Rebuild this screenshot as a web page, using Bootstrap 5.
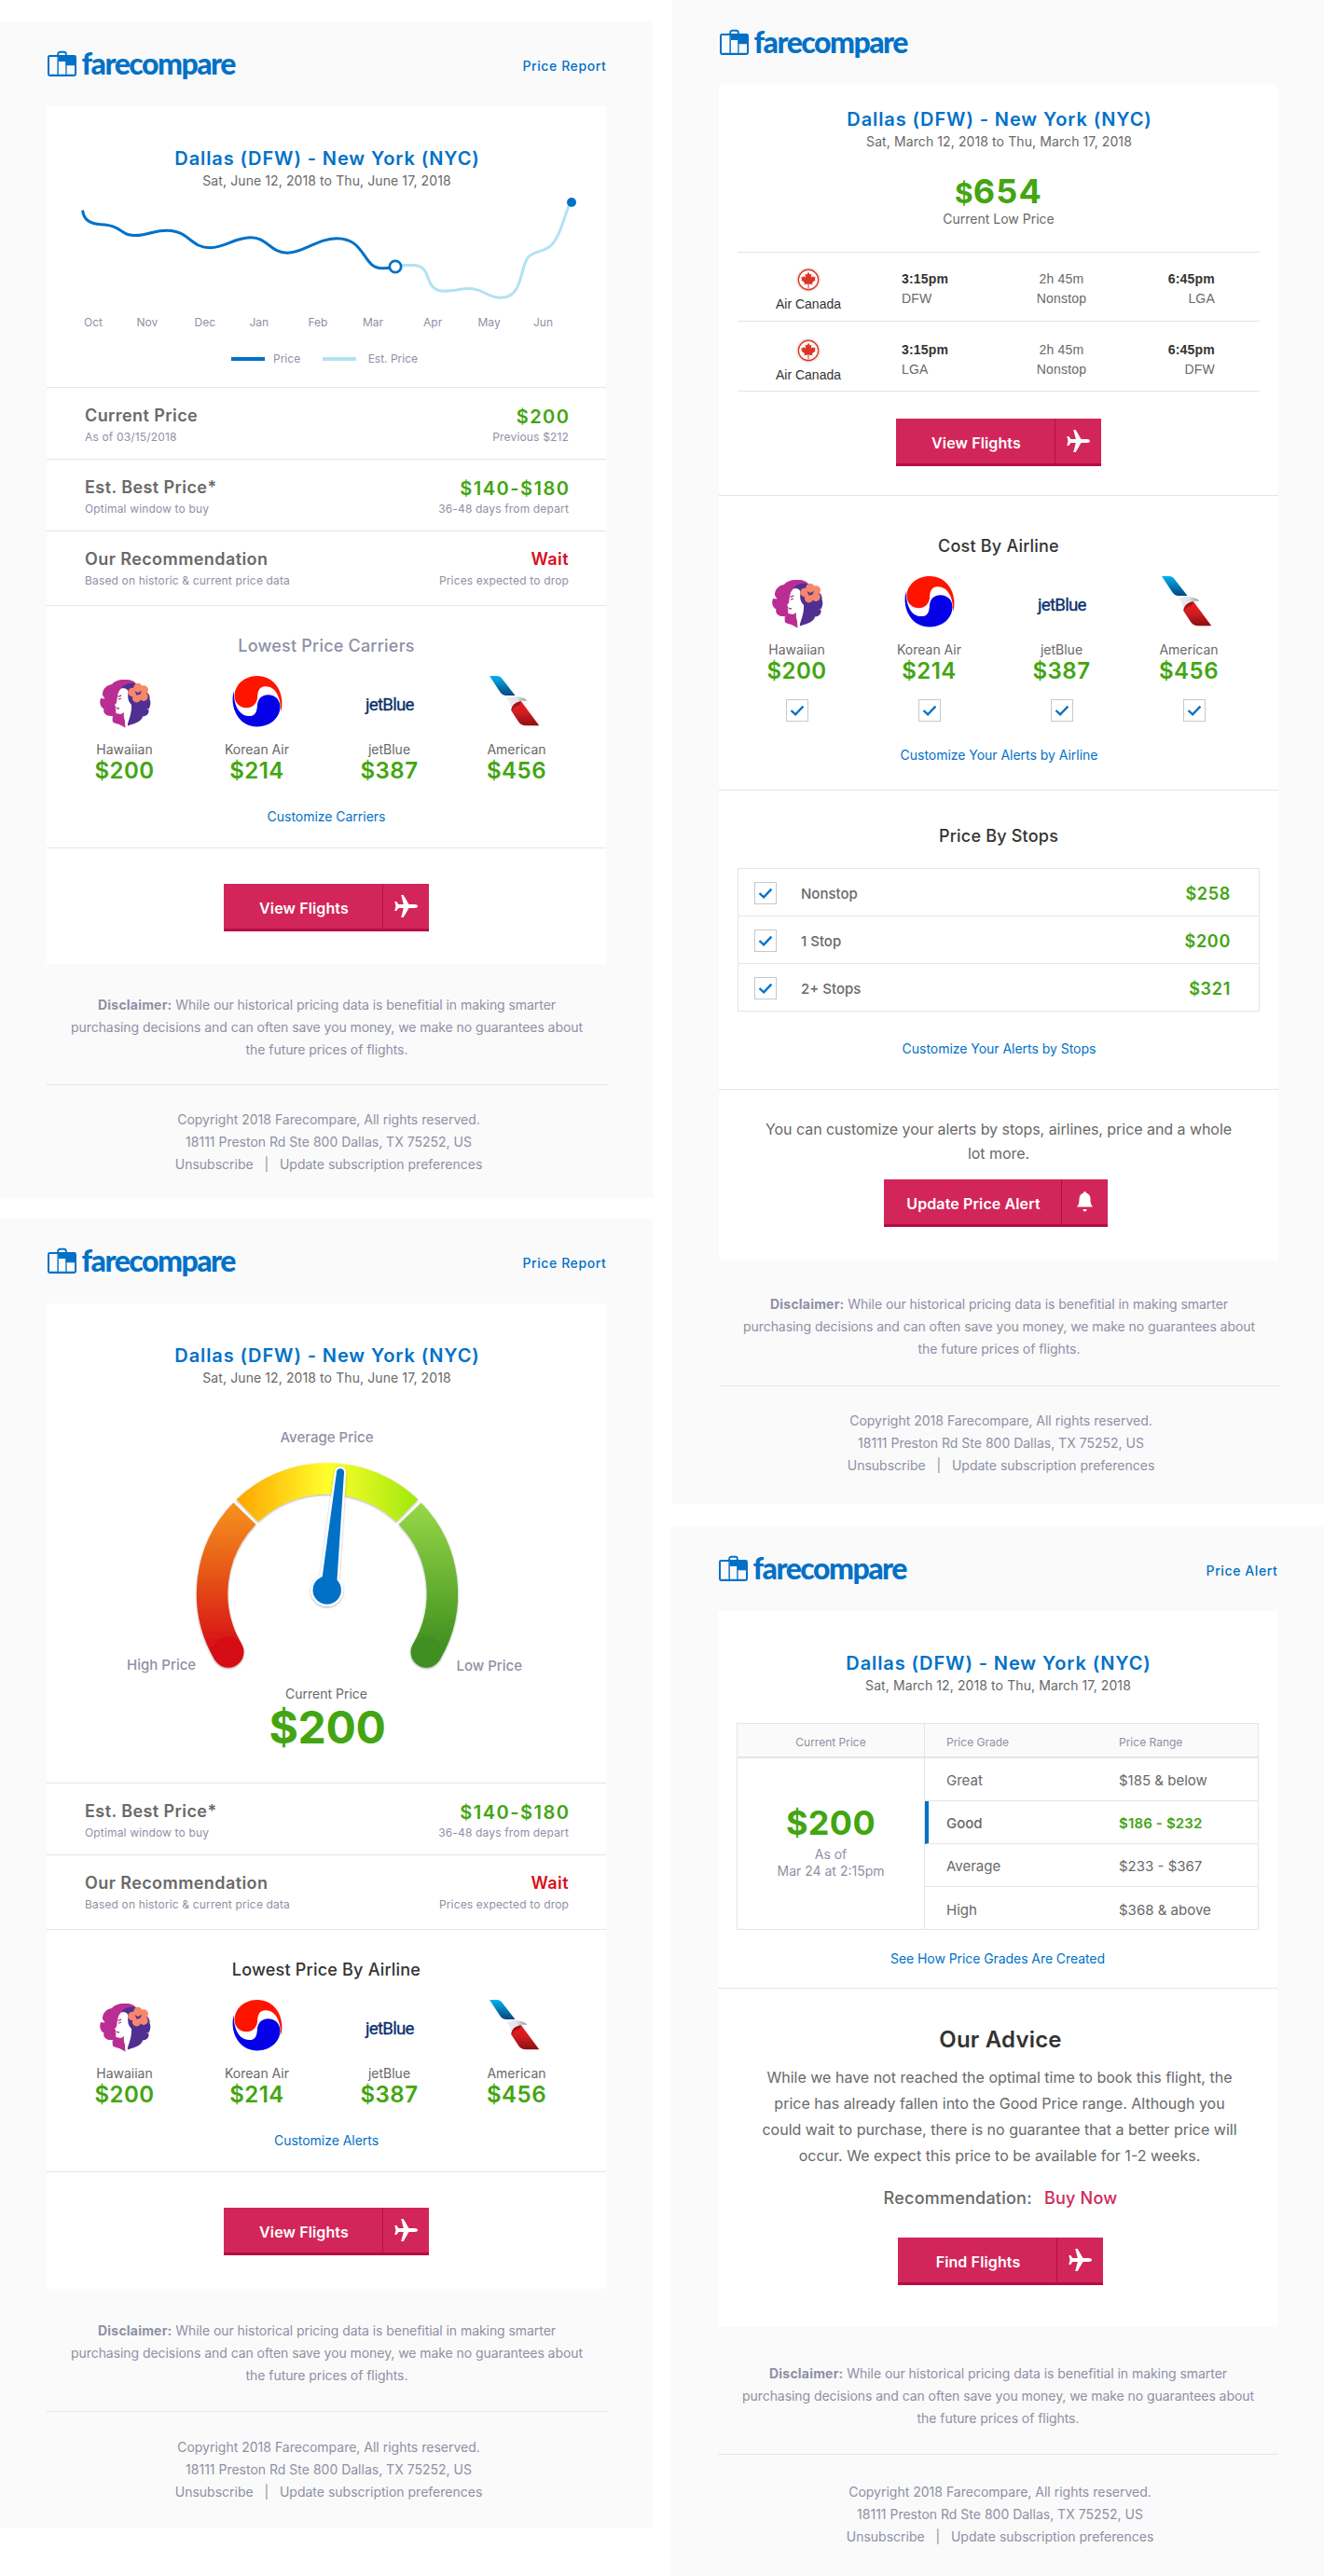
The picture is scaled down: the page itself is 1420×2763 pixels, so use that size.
<!DOCTYPE html>
<html lang="en">
<head>
<meta charset="utf-8">
<meta name="viewport" content="width=device-width, initial-scale=1">
<title>farecompare – price emails</title>
<link rel="stylesheet" href="https://cdn.jsdelivr.net/npm/bootstrap@5.3.0/dist/css/bootstrap.min.css">
<style>
:root{--fc-blue:#0071c7;--fc-green:#43a511;--fc-red:#d90f1b;--fc-pink:#d2265a;--fc-pink-dark:#b70d42;--fc-ink:#333;--fc-text:#696969;--fc-muted:#8f90a5;--fc-line:#e4e5e6}
body{font-family:Inter,"Liberation Sans",sans-serif;background:#fff;color:var(--fc-text);width:1420px;font-size:14px;line-height:17px}
a{color:var(--fc-blue);text-decoration:none}
p,h1,h2,h3{margin:0}
.board{column-gap:20px}
.col-left{width:700px;padding-top:23px;row-gap:22px}
.col-right{width:700px;row-gap:24px}
.mail{background:#fafafa;padding:0 50px}
.mail-report{height:1262px}
.mail-gauge{height:1404px}
.mail-alert{height:1613px;margin-left:1px;padding-right:49px}
.mail-grade{height:1126px}
.mail-head{height:91px}
.brand{margin-top:30px;display:block}
.brand-name{font:900 32px Lato,sans-serif;fill:var(--fc-blue);letter-spacing:-1.5px}
.kind{margin-top:39px;font-weight:500;letter-spacing:.6px;margin-right:-.4px}
.sheet{background:#fff}
.block{border-bottom:1px solid var(--fc-line);text-align:center}
.block-last{border-bottom:0}
/* type */
.t12{font-size:12px;line-height:15px}
.t14{font-size:14px;line-height:17px}
.t15{font-size:15px;line-height:19px}
.t16{font-size:16px;line-height:20px}
.t18{font-size:18px;line-height:21px}
.route{font-size:20px;line-height:24px;font-weight:600;letter-spacing:.9px;color:var(--fc-blue);padding-left:2px}
.dates{margin-top:3px;letter-spacing:.1px;padding-left:1px}
.muted{color:var(--fc-muted)}
.ink{color:var(--fc-ink)}
.green{color:var(--fc-green)}
.block-title{font-size:18px;line-height:21px;font-weight:500;letter-spacing:.2px}
/* chart */
.chart-block{height:302px;padding-top:44px}
.chart text{font:400 12px Inter,sans-serif;fill:var(--fc-muted)}
.legend{padding-left:198px;margin-top:17px}
.key{width:36px;height:4px;background:var(--fc-blue);margin-right:9px}
.key-est{background:#b2e2f2;margin:0 12.5px 0 24px}
/* stat rows */
.stat{height:77px;padding:19px 40px 0 41px;text-align:left}
.stat-tall{height:80px}
.stat h3{font-size:18px;line-height:21px;font-weight:600;letter-spacing:.42px}
.stat .sub{font-size:12px;line-height:15px;letter-spacing:.16px;color:var(--fc-muted);margin-top:5px}
.stat .amount{font-size:20px;line-height:24px;font-weight:600;letter-spacing:1.5px;margin-right:-1.500px;color:var(--fc-green)}
.stat .amount + .sub{margin-top:2px}
.wait{color:var(--fc-red)!important}
/* carriers */
.carriers{height:260px;padding-top:32px}
.carriers-pick{height:316px;padding-top:43px}
.carrier-grid{display:grid;grid-template-columns:142px 142px 142px 131px;padding-left:12.5px;margin-top:22px}
.carrier-grid svg.logo{display:block;width:56px;height:54px;margin:0 auto 16px;overflow:visible}
.carrier-grid>div:last-child svg.logo{transform:translateX(-3px)}
.carrier-grid>div:last-child .tick{transform:translateX(6px)}
.fare{font-size:24px;line-height:29px;font-weight:600;letter-spacing:.5px;color:var(--fc-green)}
.tick{display:block;width:24px;height:24px;border:1px solid #c6c8cd;background:#fff}
.carrier-grid .tick{margin:16px auto 0}
.more{display:block;letter-spacing:-.03px}
.carriers .more{margin-top:26px}
.carriers-pick .more{margin-top:27px;padding-left:1px}
/* button */
.cta{display:inline-flex;width:220px;height:51px;padding:0;border:0;border-bottom:3px solid var(--fc-pink-dark);border-radius:0;background:var(--fc-pink);color:#fff;font-size:16px;font-weight:600;letter-spacing:.12px;line-height:20px}
.cta .cta-label{flex:1;padding:16px 0 0 2px;border-right:1px solid var(--fc-pink-dark)}
.cta .cta-icon{width:49px;display:flex;align-items:center;justify-content:center}
.cta:hover{background:var(--fc-pink);color:#fff}
.cta-block{height:124px;padding-top:38px}
/* footer */
.disclaimer{padding-top:32px;height:130px;line-height:24px;letter-spacing:-.06px;border-bottom:1px solid var(--fc-line);margin-right:-1px}
.disclaimer b{letter-spacing:.2px}
.foot{padding:25px 0 0 5px;line-height:24px}
.mail-gauge .cta-block{height:125px}
.mail-gauge .disclaimer{padding-top:33px;height:132px}
.mail-gauge .foot{padding-top:26px}
.mail-alert .disclaimer{padding-top:35px;height:135px}
.mail-grade .disclaimer{padding-top:38px;height:137px}
.mail-grade .foot{padding-top:28px}
/* gauge */
.gauge-block{height:515px;padding-top:44px}
.gauge{display:block}
.gauge text{font:500 15px Inter,sans-serif;fill:var(--fc-muted)}
.now{margin-top:10px}
.now-price{font-size:48px;line-height:59px;font-weight:700;letter-spacing:-.3px;margin:-2px 0 0 2px}
/* alert */
.mail-alert .brand{margin-top:0;transform:translateY(30px)}
.low-block{height:441px;padding:25px 20px 0}
.low-price{font-size:36px;line-height:44px;height:44px;font-weight:700;letter-spacing:1.2px;margin-top:23px}
.low-price small{font-size:30px;line-height:1;font-weight:700;letter-spacing:0}
.low-note{margin-top:-1px}
.trip{display:grid;grid-template-columns:152px 135px 121px 152px;height:74px;padding-top:16px;border-bottom:1px solid var(--fc-line);font-family:"Liberation Sans",Arial,sans-serif;line-height:16px}
.trip-first{border-top:1px solid var(--fc-line);height:75px;margin-top:27px}
.trip-second{height:75px;padding-top:18px}
.trip svg{display:block;margin:0 auto 5px}
.trip .leg{padding-top:4px;letter-spacing:.2px}
.trip .leg p + p{margin-top:5px}
.trip .arrive{padding-right:48px;text-align:right}
.trip b{color:var(--fc-ink)}
.low-block .cta{margin-top:29px}
.stops-block{height:321px;padding:38px 20px 0}
.stops{border:1px solid var(--fc-line);margin-top:24px}
.stop-row{height:51px;padding:2px 30px 0 17px;border-bottom:1px solid var(--fc-line)}
.stop-row:last-child{border-bottom:0;height:50px}
.stop-row .tick{margin-right:26px}
.stop-row .t15{font-weight:500}
.stop-row .t18{font-weight:600;letter-spacing:.7px}
.stops-block .more{margin-top:31px;padding-left:1px}
.update-block{height:183px;padding-top:29px}
.update-block p{line-height:26px;letter-spacing:-.05px}
.cta-wide{width:240px;margin:15px 6px 0 0}
/* grade */
.grade-block{height:405px;padding:44px 20px 0}
.grades{display:grid;grid-template-columns:201px 1fr;border:1px solid var(--fc-line);margin-top:32px;height:222px}
.grades .th{height:37px;padding-top:12px;background:#fafafa;border-bottom:2px solid var(--fc-line)}
.grade-now{border-right:1px solid var(--fc-line)}
.grade-price{font-size:36px;line-height:44px;font-weight:700;letter-spacing:.3px;padding-top:47px}
.grade-price + p{margin-top:3px}
.grade-price + p + p{margin-top:1px}
.grade-row{height:46px;padding:2px 0 0 23px;border-bottom:1px solid var(--fc-line);text-align:left}
.grade-row:last-child{border-bottom:0}
.grade-row span:first-child,.th span:first-child{width:185px}
.grades .th.pair{padding-left:23px;text-align:left}
.grade-row.on{border-left:4px solid var(--fc-blue);padding-left:19px;font-weight:500}
.grade-row.on .green{font-weight:600;letter-spacing:.15px}
.grade-block .more{margin-top:22px;letter-spacing:-.07px}
.advice{height:363px;padding:40px 0 0 6px}
.advice h2{font-size:24px;line-height:29px;font-weight:600;letter-spacing:.2px}
.advice .copy{line-height:28px;margin-top:12px;padding-right:2px}
.verdict{margin-top:21px;font-weight:500;letter-spacing:.23px}
.verdict span{color:var(--fc-pink)}
.advice .cta{margin-top:32px}
</style>
</head>
<body>
<svg width="0" height="0" class="position-absolute" aria-hidden="true">
  <defs>
    <linearGradient id="aaBlue" x1="0" y1="0" x2="0" y2="1"><stop offset="0" stop-color="#00b2f0"/><stop offset="1" stop-color="#07457f"/></linearGradient>
    <linearGradient id="aaRed" x1="0" y1="0" x2="0" y2="1"><stop offset="0" stop-color="#ee1d23"/><stop offset=".45" stop-color="#d41c20"/><stop offset="1" stop-color="#8a1012"/></linearGradient>
    <linearGradient id="aaGrey" x1="0" y1="0" x2="1" y2="0"><stop offset="0" stop-color="#eef1f3"/><stop offset=".5" stop-color="#dfe4e8"/><stop offset="1" stop-color="#8f9ba6"/></linearGradient>
    <symbol id="brand" viewBox="0 0 210 36">
      <path d="M12.200 6.500V5a2.200 2.200 0 0 1 2.200-2.200h4.200A2.200 2.200 0 0 1 20.800 5v1.500" fill="none" stroke="#0071c7" stroke-width="1.900"/>
      <rect x="1" y="6" width="31" height="23" rx="2.400" fill="#0071c7"/>
      <path d="M3 8h8.200v18.700H3zM13 13h7.200v13.700H13zM22 17.200h8v9.500h-8z" fill="#fafafa"/>
      <path d="M11.700 8v19M21.200 17v10" stroke="#69abdf" stroke-width="1.300"/>
      <text class="brand-name" x="37.500" y="27">farecompare</text>
    </symbol>
    <symbol id="hawaiian" viewBox="0 0 56 54" overflow="visible">
      <path fill="#b92e92" d="M28 55.800C26 50 20 53 15 49.500 13.800 47 14 45 14 43 8 43.500 4 40 5.500 35.500 1 33 .5 28 2 24l4.500.6L4 20.500C3.500 15 8 9.500 14 9c3-4 9-5.500 14-5 5-.5 10 1 12 4.500L30 13 20 25l2 16 6 5z"/>
      <path fill="#4f3092" d="M24 13c3-5 11-6 17-4.500L52 18c2 2 3 4 2.500 7 1.500 3 1 7-1 10.500L51 35l2.500 1.500C54 40 52 43 47 43.500 46 49 38 51 31 53.500l-1-5L31 26c-1-3 0-9-2-12z"/>
      <path fill="#b92e92" d="M18 40c3 1.500 7 1 9-1.500L28.500 55.500 20 51z"/>
      <path fill="#fff" d="M24 13.500c4-1 7.500.5 7.500 4.500-1 6 .5 10 3.500 13 .5 8-2.500 15-4.500 22h-1.700c0-6-3.300-8-1.500-14.500-2 2.500-6 2.500-8.800 1.500-.5-2-.5-3 0-4-1-1-1.500-1.500 0-2.500l-.5-1c-1-1-1.500-1.500.5-3 1.500-2.500.5-4.500 1.500-7.500.5-4 2-7 4-8.500z"/>
      <path d="M14.300 49.500c-.3-3 0-4.500.5-6.500" stroke="#fff" stroke-width=".9" fill="none"/>
      <path d="M20.500 22.300l3.800-1.500M21 25.200l3-1.200M18.500 34.300l3.500.7" stroke="#b92e92" stroke-width="1.300" fill="none"/>
      <g fill="#f7876a"><circle cx="42" cy="12.500" r="4.700"/><circle cx="48.300" cy="15" r="4.700"/><circle cx="48" cy="22.300" r="4.700"/><circle cx="40.500" cy="23.800" r="4.600"/><circle cx="36" cy="17.500" r="4.700"/><circle cx="42.500" cy="18" r="5"/></g>
      <path d="M38.500 16l3.500 2 4-2.300-1.500 4-4 1z" fill="#5a3593"/>
    </symbol>
    <symbol id="korean" viewBox="0 0 56 54" overflow="visible">
      <path fill="#ff1400" d="M53.300 38.500C58 20 48 0 28 0 14 0 3 10 3.500 22c.5 8 6.500 12.200 13 12.200S27 30 28 24c.3-8 2-12.500 8.500-12.700C47 11 53.300 22 53.300 38.500z"/>
      <path fill="#0400e8" transform="rotate(180 28 27.200)" d="M53.300 38.500C58 20 48 0 28 0 14 0 3 10 3.500 22c.5 8 6.500 12.200 13 12.200S27 30 28 24c.3-8 2-12.500 8.500-12.700C47 11 53.300 22 53.300 38.500z"/>
    </symbol>
    <symbol id="jetblue" viewBox="0 0 56 54" overflow="visible">
      <text x="2" y="37.300" textLength="52.500" lengthAdjust="spacing" style="font:400 18.700px Roboto,sans-serif" fill="#0b2f6d" stroke="#0b2f6d" stroke-width=".3">jetBlue</text>
    </symbol>
    <symbol id="american" viewBox="0 0 56 54" overflow="visible">
      <path fill="url(#aaBlue)" d="M2 0h8q3.500 0 5.500 3l14 18H19q-3.500-.5-5.500-3.500z"/>
      <path fill="url(#aaGrey)" d="M19.500 24c8-3.200 18.500-2.500 23 2.700-5 .3-9.500-.2-12.500 1.500-3 2-4.500 5-4.700 7.800C24.500 30 23 25.500 19.500 24z"/>
      <path fill="url(#aaRed)" d="M36 27.300c-5.500.2-11 4.700-10.500 10.200L33 49q3 4.300 8 4.300h14.300z"/>
      <path fill="#8a1012" opacity=".75" d="M36 27.300c-5.500.2-11 4.700-10.500 10.200C28 33 31.500 31.500 34 31.500z"/>
    </symbol>
    <symbol id="maple" viewBox="0 0 26 26">
      <circle cx="13" cy="13" r="12.500" fill="#fff" stroke="#dcdcdc"/>
      <circle cx="13" cy="13" r="10.700" fill="none" stroke="#dc3522" stroke-width="1.400"/>
      <path fill="#dc3522" d="M13 4.600L14.500 7.600 16.500 6.700 15.900 10.700 18.200 8.900 18.600 10.300 20.800 10 19.800 12.300 20.700 13.300 17 16.300 17.500 18.300 13.500 17.500V22.500H12.500V17.500L8.500 18.300 9 16.300 5.300 13.300 6.200 12.300 5.200 10 7.400 10.300 7.800 8.900 10.100 10.700 9.500 6.700 11.500 7.600z"/>
    </symbol>
    <symbol id="check" viewBox="0 0 22 22"><path d="M4.500 11l4.600 4.400 8.300-8.800" fill="none" stroke="#0071c7" stroke-width="2.300"/></symbol>
    <symbol id="plane" viewBox="0 0 25 24"><path fill="#fff" d="M25 12c0 1.300-1.500 2-3.500 2h-6L9.700 24H7.200l2.600-10H4.500L2.200 17H.3l1.200-5L.3 7h1.900l2.300 3h5.300L7.200 0h2.500l5.800 10h6c2 0 3.500.7 3.500 2z"/></symbol>
    <symbol id="bell" viewBox="0 0 17 22"><path fill="#fff" d="M8.500 0C9.500 0 10 .8 10 1.500c3 .8 4.500 3.500 4.500 6.500 0 5 1 6.500 2.500 8.500H0C1.500 14.500 2.500 13 2.500 8c0-3 1.500-5.700 4.500-6.500C7 .8 7.500 0 8.500 0zM6.500 19h4a2 2.500 0 0 1-4 0z"/></symbol>
  </defs>
</svg>

<main class="board d-flex align-items-start">
  <div class="col-left d-flex flex-column">

    <!-- Price report with history chart -->
    <section class="mail mail-report">
      <header class="mail-head d-flex justify-content-between align-items-start">
        <svg class="brand" width="210" height="36"><use href="#brand"/></svg>
        <a class="kind" href="#">Price Report</a>
      </header>
      <div class="sheet">
        <div class="block chart-block">
          <h1 class="route">Dallas (DFW) - New York (NYC)</h1>
          <p class="dates">Sat, June 12, 2018 to Thu, June 17, 2018</p>
          <svg class="chart d-block" width="600" height="158" viewBox="50 202 600 158">
            <path d="M430 284.500h13c23 0 9 27.800 34 27.800 9 0 18-2.800 26-2.800 16 0 19 9.800 34 9.800 25 0 20-34 30-44 8-7 17-5 24-12 10-10 14-31 20-45" fill="none" stroke="#b2e2f2" stroke-width="3"/>
            <path d="M88.800 226.700C90 236 97 240 108 240.800 121 241.500 125 244 133 249.500 141 255 156 251.500 163 249.500 172 247 185 244.500 197 252 208 259.500 212 265.700 225.500 265.700 241 265.700 252 254.700 269 254.700 287 254.700 290 271.300 308 271.300 326 271.300 340 255.700 361 255.700 393 255.700 388 287.700 410 287.700 414 287.700 418 287.300 420 287" fill="none" stroke="#0071c7" stroke-width="3" stroke-linecap="round"/>
            <circle cx="424" cy="286" r="6.200" fill="#fff" stroke="#0071c7" stroke-width="2.700"/>
            <circle cx="613" cy="217" r="5" fill="#0071c7"/>
            <text x="90" y="350">Oct</text><text x="146.500" y="350">Nov</text><text x="208.500" y="350">Dec</text><text x="267.500" y="350">Jan</text><text x="330.500" y="350">Feb</text><text x="389" y="350">Mar</text><text x="454" y="350">Apr</text><text x="512.500" y="350">May</text><text x="572" y="350">Jun</text>
          </svg>
          <div class="legend d-flex align-items-center t12 muted">
            <span class="key"></span><span>Price</span><span class="key key-est"></span><span>Est. Price</span>
          </div>
        </div>
        <div class="block stat d-flex justify-content-between">
          <div><h3>Current Price</h3><p class="sub">As of 03/15/2018</p></div>
          <div class="text-end"><p class="amount">$200</p><p class="sub">Previous $212</p></div>
        </div>
        <div class="block stat d-flex justify-content-between">
          <div><h3>Est. Best Price*</h3><p class="sub">Optimal window to buy</p></div>
          <div class="text-end"><p class="amount">$140-$180</p><p class="sub">36-48 days from depart</p></div>
        </div>
        <div class="block stat stat-tall d-flex justify-content-between">
          <div><h3>Our Recommendation</h3><p class="sub">Based on historic &amp; current price data</p></div>
          <div class="text-end"><h3 class="wait">Wait</h3><p class="sub">Prices expected to drop</p></div>
        </div>
        <div class="block carriers">
          <h2 class="block-title muted">Lowest Price Carriers</h2>
          <div class="carrier-grid">
            <div><svg class="logo"><use href="#hawaiian"/></svg><p>Hawaiian</p><p class="fare">$200</p></div>
            <div><svg class="logo"><use href="#korean"/></svg><p>Korean Air</p><p class="fare">$214</p></div>
            <div><svg class="logo"><use href="#jetblue"/></svg><p>jetBlue</p><p class="fare">$387</p></div>
            <div><svg class="logo"><use href="#american"/></svg><p>American</p><p class="fare">$456</p></div>
          </div>
          <a class="more" href="#">Customize Carriers</a>
        </div>
        <div class="block block-last cta-block">
          <a class="btn cta" href="#"><span class="cta-label">View Flights</span><span class="cta-icon"><svg width="25" height="24"><use href="#plane"/></svg></span></a>
        </div>
      </div>
      <p class="disclaimer muted text-center"><b>Disclaimer:</b> While our historical pricing data is benefitial in making smarter<br>purchasing decisions and can often save you money, we make no guarantees about<br>the future prices of flights.</p>
      <footer class="foot muted text-center">Copyright 2018 Farecompare, All rights reserved.<br>18111 Preston Rd Ste 800 Dallas, TX 75252, US<br>Unsubscribe &nbsp; | &nbsp; Update subscription preferences</footer>
    </section>

    <!-- Price report with gauge -->
    <section class="mail mail-gauge">
      <header class="mail-head d-flex justify-content-between align-items-start">
        <svg class="brand" width="210" height="36"><use href="#brand"/></svg>
        <a class="kind" href="#">Price Report</a>
      </header>
      <div class="sheet">
        <div class="block gauge-block">
          <h1 class="route">Dallas (DFW) - New York (NYC)</h1>
          <p class="dates">Sat, June 12, 2018 to Thu, June 17, 2018</p>
          <svg class="gauge" width="600" height="312" viewBox="50 1486 600 312">
            <defs>
              <linearGradient id="gHigh" gradientUnits="userSpaceOnUse" x1="0" y1="1612" x2="0" y2="1770"><stop offset="0" stop-color="#f7931b"/><stop offset=".5" stop-color="#e55419"/><stop offset="1" stop-color="#d70e19"/></linearGradient>
              <linearGradient id="gAvg" gradientUnits="userSpaceOnUse" x1="258" y1="0" x2="448" y2="0"><stop offset="0" stop-color="#ffa800"/><stop offset=".49" stop-color="#ffff2c"/><stop offset="1" stop-color="#a0e80c"/></linearGradient>
              <linearGradient id="gLow" gradientUnits="userSpaceOnUse" x1="0" y1="1612" x2="0" y2="1770"><stop offset="0" stop-color="#98d847"/><stop offset="1" stop-color="#3f8f20"/></linearGradient>
              <filter id="soft" x="-20%" y="-20%" width="140%" height="140%"><feDropShadow dx="0" dy="1" stdDeviation="1.300" flood-color="#000" flood-opacity=".35"/></filter>
            </defs>
            <text x="350.500" y="1547" text-anchor="middle">Average Price</text>
            <g filter="url(#soft)">
              <g fill="none" stroke-width="33.500">
                <path stroke="url(#gHigh)" d="M244.800 1772A123.500 123.500 0 0 1 262.300 1623.300"/>
                <path stroke="url(#gAvg)" d="M265.300 1620.300A123.300 123.300 0 0 1 436.700 1620.300"/>
                <path stroke="url(#gLow)" d="M439.700 1623.300A123.500 123.500 0 0 1 457.200 1772"/>
              </g>
              <circle cx="244.800" cy="1772" r="16.700" fill="#d70e19"/>
              <circle cx="457.200" cy="1772" r="16.700" fill="#3f8f20"/>
            </g>
            <g filter="url(#soft)" fill="#fff" stroke="#fff" stroke-width="4.500">
              <path d="M361 1579a4 4 0 0 1 8 .5L361.400 1694H345z"/><circle cx="350.700" cy="1705.600" r="15.200"/>
            </g>
            <g fill="#0071c7"><path d="M361 1579a4 4 0 0 1 8 .5L361.400 1696H345z"/><circle cx="350.700" cy="1705.600" r="15.200"/></g>
            <text x="136" y="1790.500">High Price</text>
            <text x="489.500" y="1792">Low Price</text>
          </svg>
          <p class="now">Current Price</p>
          <p class="now-price green">$200</p>
        </div>
        <div class="block stat d-flex justify-content-between">
          <div><h3>Est. Best Price*</h3><p class="sub">Optimal window to buy</p></div>
          <div class="text-end"><p class="amount">$140-$180</p><p class="sub">36-48 days from depart</p></div>
        </div>
        <div class="block stat stat-tall d-flex justify-content-between">
          <div><h3>Our Recommendation</h3><p class="sub">Based on historic &amp; current price data</p></div>
          <div class="text-end"><h3 class="wait">Wait</h3><p class="sub">Prices expected to drop</p></div>
        </div>
        <div class="block carriers">
          <h2 class="block-title ink">Lowest Price By Airline</h2>
          <div class="carrier-grid">
            <div><svg class="logo"><use href="#hawaiian"/></svg><p>Hawaiian</p><p class="fare">$200</p></div>
            <div><svg class="logo"><use href="#korean"/></svg><p>Korean Air</p><p class="fare">$214</p></div>
            <div><svg class="logo"><use href="#jetblue"/></svg><p>jetBlue</p><p class="fare">$387</p></div>
            <div><svg class="logo"><use href="#american"/></svg><p>American</p><p class="fare">$456</p></div>
          </div>
          <a class="more" href="#">Customize Alerts</a>
        </div>
        <div class="block block-last cta-block">
          <a class="btn cta" href="#"><span class="cta-label">View Flights</span><span class="cta-icon"><svg width="25" height="24"><use href="#plane"/></svg></span></a>
        </div>
      </div>
      <p class="disclaimer muted text-center"><b>Disclaimer:</b> While our historical pricing data is benefitial in making smarter<br>purchasing decisions and can often save you money, we make no guarantees about<br>the future prices of flights.</p>
      <footer class="foot muted text-center">Copyright 2018 Farecompare, All rights reserved.<br>18111 Preston Rd Ste 800 Dallas, TX 75252, US<br>Unsubscribe &nbsp; | &nbsp; Update subscription preferences</footer>
    </section>
  </div>

  <div class="col-right d-flex flex-column">

    <!-- Low fare alert -->
    <section class="mail mail-alert">
      <header class="mail-head"><svg class="brand" width="210" height="36"><use href="#brand"/></svg></header>
      <div class="sheet">
        <div class="block low-block">
          <h1 class="route">Dallas (DFW) - New York (NYC)</h1>
          <p class="dates">Sat, March 12, 2018 to Thu, March 17, 2018</p>
          <p class="low-price green"><small>$</small>654</p>
          <p class="low-note">Current Low Price</p>
          <div class="trip trip-first">
            <div class="ink"><svg width="26" height="26"><use href="#maple"/></svg>Air Canada</div>
            <div class="leg text-start ps-4"><p><b>3:15pm</b></p><p>DFW</p></div>
            <div class="leg"><p>2h 45m</p><p>Nonstop</p></div>
            <div class="leg arrive"><p><b>6:45pm</b></p><p>LGA</p></div>
          </div>
          <div class="trip trip-second">
            <div class="ink"><svg width="26" height="26"><use href="#maple"/></svg>Air Canada</div>
            <div class="leg text-start ps-4"><p><b>3:15pm</b></p><p>LGA</p></div>
            <div class="leg"><p>2h 45m</p><p>Nonstop</p></div>
            <div class="leg arrive"><p><b>6:45pm</b></p><p>DFW</p></div>
          </div>
          <a class="btn cta" href="#"><span class="cta-label">View Flights</span><span class="cta-icon"><svg width="25" height="24"><use href="#plane"/></svg></span></a>
        </div>
        <div class="block carriers-pick">
          <h2 class="block-title ink">Cost By Airline</h2>
          <div class="carrier-grid">
            <div><svg class="logo"><use href="#hawaiian"/></svg><p>Hawaiian</p><p class="fare">$200</p><svg class="tick"><use href="#check"/></svg></div>
            <div><svg class="logo"><use href="#korean"/></svg><p>Korean Air</p><p class="fare">$214</p><svg class="tick"><use href="#check"/></svg></div>
            <div><svg class="logo"><use href="#jetblue"/></svg><p>jetBlue</p><p class="fare">$387</p><svg class="tick"><use href="#check"/></svg></div>
            <div><svg class="logo"><use href="#american"/></svg><p>American</p><p class="fare">$456</p><svg class="tick"><use href="#check"/></svg></div>
          </div>
          <a class="more" href="#">Customize Your Alerts by Airline</a>
        </div>
        <div class="block stops-block">
          <h2 class="block-title ink">Price By Stops</h2>
          <div class="stops">
            <div class="stop-row d-flex align-items-center"><svg class="tick"><use href="#check"/></svg><span class="t15">Nonstop</span><span class="t18 green ms-auto">$258</span></div>
            <div class="stop-row d-flex align-items-center"><svg class="tick"><use href="#check"/></svg><span class="t15">1 Stop</span><span class="t18 green ms-auto">$200</span></div>
            <div class="stop-row d-flex align-items-center"><svg class="tick"><use href="#check"/></svg><span class="t15">2+ Stops</span><span class="t18 green ms-auto">$321</span></div>
          </div>
          <a class="more" href="#">Customize Your Alerts by Stops</a>
        </div>
        <div class="block block-last update-block">
          <p class="t16">You can customize your alerts by stops, airlines, price and a whole<br>lot more.</p>
          <a class="btn cta cta-wide" href="#"><span class="cta-label">Update Price Alert</span><span class="cta-icon"><svg width="17" height="22"><use href="#bell"/></svg></span></a>
        </div>
      </div>
      <p class="disclaimer muted text-center"><b>Disclaimer:</b> While our historical pricing data is benefitial in making smarter<br>purchasing decisions and can often save you money, we make no guarantees about<br>the future prices of flights.</p>
      <footer class="foot muted text-center">Copyright 2018 Farecompare, All rights reserved.<br>18111 Preston Rd Ste 800 Dallas, TX 75252, US<br>Unsubscribe &nbsp; | &nbsp; Update subscription preferences</footer>
    </section>

    <!-- Price grade alert -->
    <section class="mail mail-grade">
      <header class="mail-head d-flex justify-content-between align-items-start">
        <svg class="brand" width="210" height="36"><use href="#brand"/></svg>
        <a class="kind" href="#">Price Alert</a>
      </header>
      <div class="sheet">
        <div class="block grade-block">
          <h1 class="route">Dallas (DFW) - New York (NYC)</h1>
          <p class="dates">Sat, March 12, 2018 to Thu, March 17, 2018</p>
          <div class="grades">
            <div class="grade-now">
              <div class="th t12 muted">Current Price</div>
              <p class="grade-price green">$200</p>
              <p class="muted">As of</p>
              <p class="muted">Mar 24 at 2:15pm</p>
            </div>
            <div>
              <div class="th pair t12 muted d-flex"><span>Price Grade</span><span>Price Range</span></div>
              <div class="grade-row t15 d-flex align-items-center"><span>Great</span><span>$185 &amp; below</span></div>
              <div class="grade-row on t15 d-flex align-items-center"><span>Good</span><span class="green">$186 - $232</span></div>
              <div class="grade-row t15 d-flex align-items-center"><span>Average</span><span>$233 - $367</span></div>
              <div class="grade-row t15 d-flex align-items-center"><span>High</span><span>$368 &amp; above</span></div>
            </div>
          </div>
          <a class="more" href="#">See How Price Grades Are Created</a>
        </div>
        <div class="block block-last advice">
          <h2 class="ink">Our Advice</h2>
          <p class="copy t16">While we have not reached the optimal time to book this flight, the<br>price has already fallen into the Good Price range. Although you<br>could wait to purchase, there is no guarantee that a better price will<br>occur. We expect this price to be available for 1-2 weeks.</p>
          <p class="verdict t18">Recommendation: <span class="ms-2">Buy Now</span></p>
          <a class="btn cta" href="#"><span class="cta-label">Find Flights</span><span class="cta-icon"><svg width="25" height="24"><use href="#plane"/></svg></span></a>
        </div>
      </div>
      <p class="disclaimer muted text-center"><b>Disclaimer:</b> While our historical pricing data is benefitial in making smarter<br>purchasing decisions and can often save you money, we make no guarantees about<br>the future prices of flights.</p>
      <footer class="foot muted text-center">Copyright 2018 Farecompare, All rights reserved.<br>18111 Preston Rd Ste 800 Dallas, TX 75252, US<br>Unsubscribe &nbsp; | &nbsp; Update subscription preferences</footer>
    </section>
  </div>
</main>
<script src="https://cdn.jsdelivr.net/npm/bootstrap@5.3.0/dist/js/bootstrap.bundle.min.js"></script>
</body>
</html>
